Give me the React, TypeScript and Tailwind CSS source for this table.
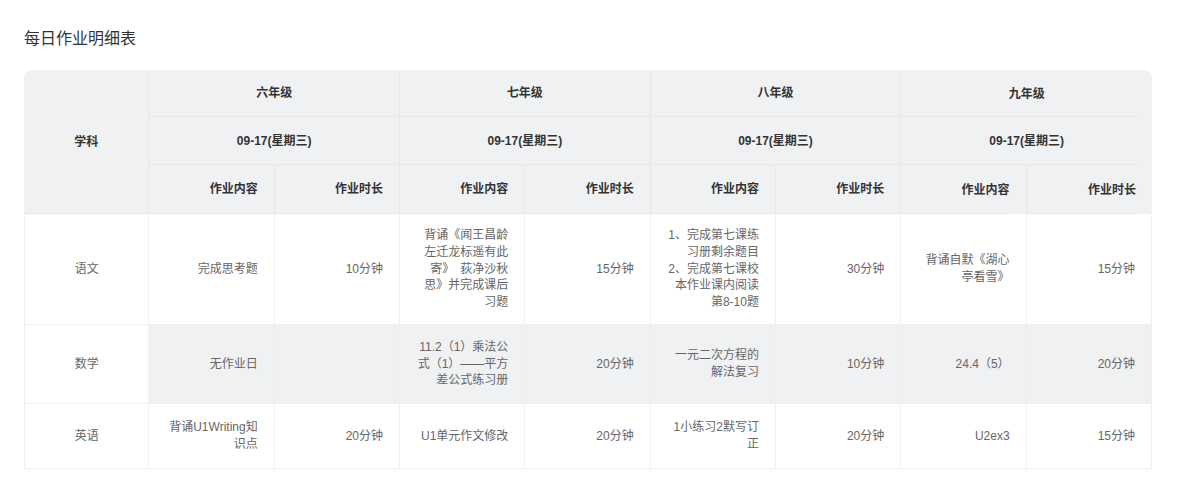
import React from 'react';

type Cell = { content: string; time: string };
type Row = { subject: string; cells: Cell[]; height: string; hover?: boolean };

const grades = ['六年级', '七年级', '八年级', '九年级'];
const date = '09-17(星期三)';

const rows: Row[] = [
  {
    subject: '语文',
    height: 'h-[111px]',
    cells: [
      { content: '完成思考题', time: '10分钟' },
      { content: '背诵《闻王昌龄左迁龙标遥有此寄》\u3000荻净沙秋思》并完成课后习题', time: '15分钟' },
      { content: '1、完成第七课练习册剩余题目\n2、完成第七课校本作业课内阅读第8-10题', time: '30分钟' },
      { content: '背诵自默《湖心亭看雪》', time: '15分钟' },
    ],
  },
  {
    subject: '数学',
    height: 'h-[79px]',
    hover: true,
    cells: [
      { content: '无作业日', time: '' },
      { content: '11.2（1）乘法公式（1）——平方差公式练习册', time: '20分钟' },
      { content: '一元二次方程的解法复习', time: '10分钟' },
      { content: '24.4（5）', time: '20分钟' },
    ],
  },
  {
    subject: '英语',
    height: 'h-[65px]',
    cells: [
      { content: '背诵U1Writing知识点', time: '20分钟' },
      { content: 'U1单元作文修改', time: '20分钟' },
      { content: '1小练习2默写订正', time: '20分钟' },
      { content: 'U2ex3', time: '15分钟' },
    ],
  },
];

// header cell in the last column: bottom line stops short of the scrollbar gutter
const gutterLine =
  'relative after:absolute after:bottom-0 after:left-0 after:right-[15px] after:h-px after:bg-[#e6e7e9]';

export default function App() {
  return (
    <div
      className="min-h-[496px] bg-white pl-6 pr-[25px] pt-[27px]"
      style={{ fontFamily: '"Liberation Sans", Arial, "Noto Sans CJK SC", sans-serif' }}
    >
      <h1 className="text-base leading-6 font-normal text-[#333]">每日作业明细表</h1>

      <table className="mt-[19px] w-full table-fixed border-separate border-spacing-0 text-xs">
        <colgroup>
          {Array.from({ length: 9 }).map((_, i) => (
            <col key={i} />
          ))}
        </colgroup>
        <thead className="text-[#333] font-bold">
          <tr className="h-[47px]">
            <th
              rowSpan={3}
              className="rounded-tl-lg border-r border-b border-[#e6e7e9] bg-[#f0f1f3] text-center font-bold"
            >
              学科
            </th>
            {grades.map((g, i) => (
              <th
                key={g}
                colSpan={2}
                className={`bg-[#f0f1f3] text-center font-bold ${
                  i === 3 ? `rounded-tr-lg ${gutterLine}` : 'border-r border-b border-[#e6e7e9]'
                }`}
              >
                {g}
              </th>
            ))}
          </tr>
          <tr className="h-[48px]">
            {grades.map((g, i) => (
              <th
                key={g}
                colSpan={2}
                className={`bg-[#f0f1f3] text-center font-bold ${
                  i === 3 ? gutterLine : 'border-r border-b border-[#e6e7e9]'
                }`}
              >
                {date}
              </th>
            ))}
          </tr>
          <tr className="h-[49px]">
            {grades.map((g, i) => (
              <React.Fragment key={g}>
                <th
                  className={`bg-[#f0f1f3] px-4 text-right font-bold border-r border-[#e6e7e9] ${
                    i === 3 ? gutterLine : 'border-b'
                  }`}
                >
                  作业内容
                </th>
                <th
                  className={`bg-[#f0f1f3] px-4 text-right font-bold ${
                    i === 3 ? gutterLine : 'border-r border-b border-[#e6e7e9]'
                  }`}
                >
                  作业时长
                </th>
              </React.Fragment>
            ))}
          </tr>
        </thead>
        <tbody className="text-[#666]">
          {rows.map((r) => (
            <tr key={r.subject} className={r.height}>
              <td className="border-l border-r border-b border-[#f0f0f0] bg-white text-center">
                {r.subject}
              </td>
              {r.cells.map((c, i) => (
                <React.Fragment key={i}>
                  <td
                    className={`border-r border-b px-4 text-right leading-[1.4] whitespace-pre-line break-all ${
                      r.hover ? 'bg-[#f0f1f3] border-[#eceef0]' : 'bg-white border-[#f0f0f0]'
                    }`}
                  >
                    {c.content}
                  </td>
                  <td
                    className={`border-r border-b px-4 text-right ${
                      r.hover ? 'bg-[#f0f1f3] border-[#eceef0]' : 'bg-white border-[#f0f0f0]'
                    }`}
                  >
                    {c.time}
                  </td>
                </React.Fragment>
              ))}
            </tr>
          ))}
        </tbody>
      </table>
    </div>
  );
}
